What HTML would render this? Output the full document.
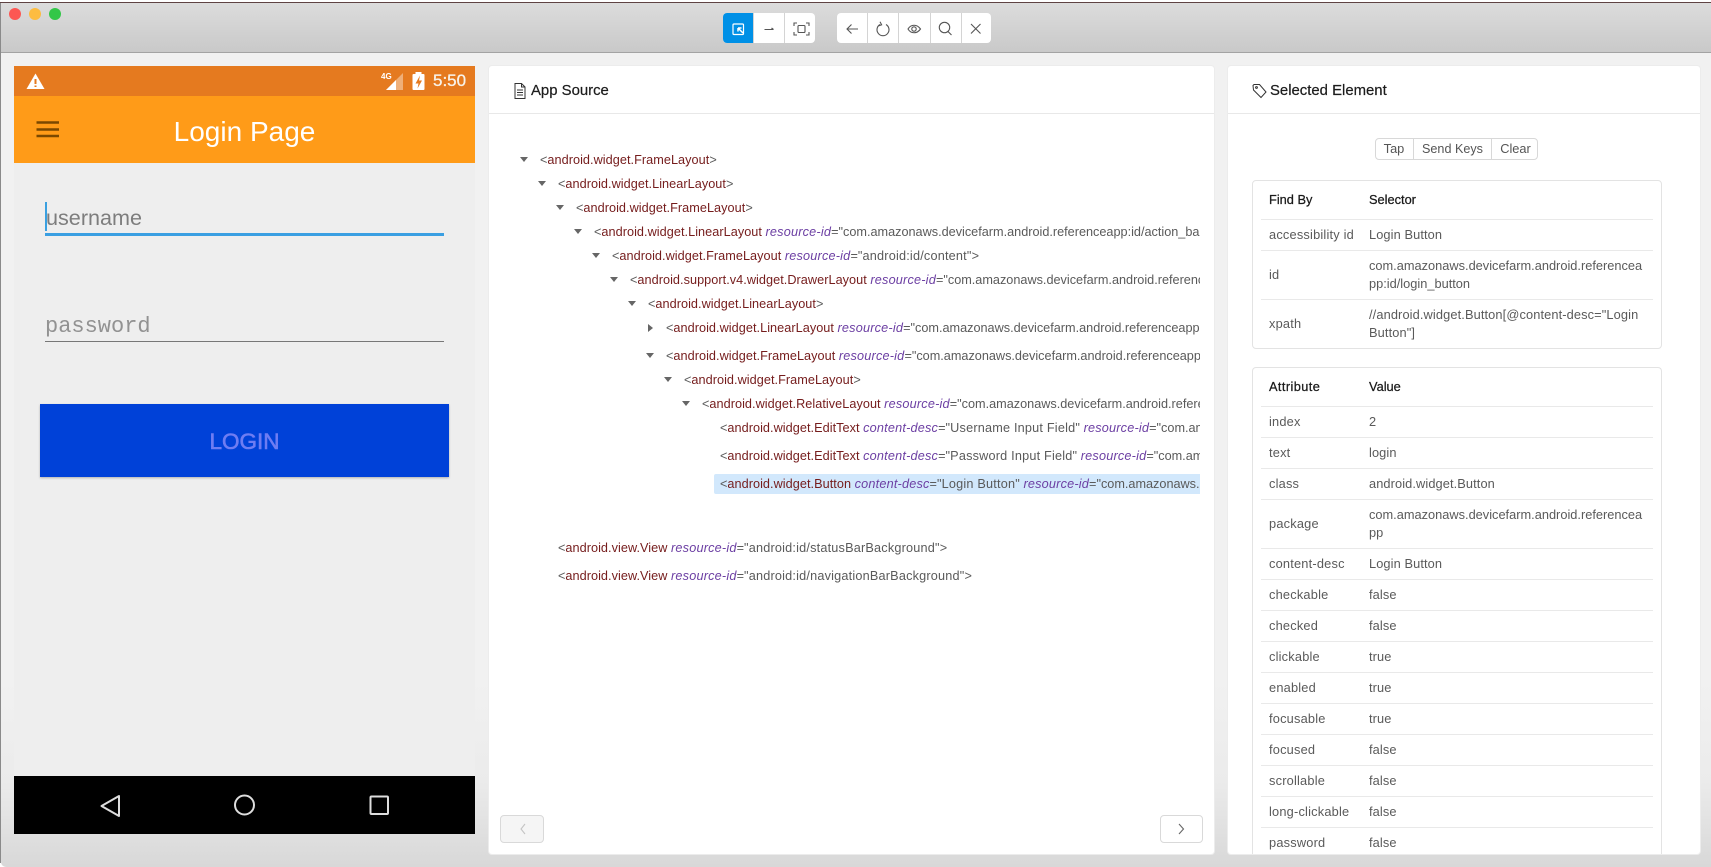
<!DOCTYPE html>
<html lang="en"><head><meta charset="utf-8"><title>Appium Inspector</title>
<style>
html,body{margin:0;padding:0}
body{width:1711px;height:867px;overflow:hidden;position:relative;font-family:"Liberation Sans",sans-serif;background:#fff}
div{position:absolute}
#win{left:1px;top:2px;width:1710px;height:865px;background:linear-gradient(#f1f1f1 0,#f1f1f1 680px,#ebebeb 780px,#d8d8d8 865px);border-bottom-left-radius:5px}
#edge{left:0;top:3px;width:1px;height:860px;background:#8a8a8a}
#topline{left:0;top:2px;width:1711px;height:1px;background:#5f4343}
#bar{left:1px;top:3px;width:1710px;height:49px;background:linear-gradient(#dcdcdc,#c9c9c9);border-bottom:1px solid #a3a3a3}
.dot{width:12px;height:12px;border-radius:50%;top:8px}
.grp{top:13px;height:30px;background:#fff;border-radius:4px}
.sep{top:0;width:1px;height:30px;background:#d4d4d4}
.panel{top:66px;height:788px;background:#fff;border-radius:3px;box-shadow:0 0 0 1px #ececec}
.hd{top:113px;height:1px;background:#e8e8e8}
.ttl{top:81px;line-height:20px;color:#1c1c1c;font-size:14.9px;white-space:nowrap;-webkit-text-stroke:.2px #1c1c1c}
.r{white-space:nowrap;overflow:hidden;line-height:20px;height:20px;font-size:12.68px;color:#5a5a5a}
.r b{font-weight:normal;color:#751c1c;letter-spacing:.05px}
.r i{color:#6c3fa3;letter-spacing:.2px}
.r u{text-decoration:none;letter-spacing:.2px}
.tri{width:0;height:0;border-left:4px solid transparent;border-right:4px solid transparent;border-top:5.5px solid #666}
.triR{width:0;height:0;border-top:4px solid transparent;border-bottom:4px solid transparent;border-left:5.5px solid #666}
.tb{border:1px solid #e3e3e3;border-radius:4px;box-sizing:border-box}
.ln{height:1px;background:#e9e9e9;left:1261px;width:392px}
.c,.d{font-size:12.8px;color:#5a5a5a;line-height:18px;white-space:nowrap}
.c{left:1269px;letter-spacing:.2px}.d{left:1369px;letter-spacing:.1px}
.h{color:#1a1a1a;-webkit-text-stroke:.25px #1a1a1a;letter-spacing:0}
</style></head><body>
<div id="win"></div><div id="edge"></div>
<div id="bar"></div><div id="topline"></div>
<div class="dot" style="left:9px;background:#fc5753"></div>
<div class="dot" style="left:29px;background:#fdbc40"></div>
<div class="dot" style="left:49px;background:#33c748"></div>

<div class="grp" style="left:723px;width:92px"><div style="left:0;top:0;width:30px;height:30px;background:#0090e6;border-radius:4px 0 0 4px"></div><div class="sep" style="left:30px"></div><div class="sep" style="left:61px"></div></div>
<div class="grp" style="left:837px;width:154px"><div class="sep" style="left:30px"></div><div class="sep" style="left:61px"></div><div class="sep" style="left:93px"></div><div class="sep" style="left:124px"></div></div>

<svg style="position:absolute;left:0;top:0" width="1711" height="867" viewBox="0 0 1711 867" fill="none">
<!-- toolbar icons -->
<rect x="733" y="24" width="10.500" height="10.500" fill="none" stroke="#fff" stroke-width="1.200" rx="1"/>
<path d="M738 28l5 5M738 28v3.500M738 28h3.500" stroke="#fff" stroke-width="1.500"/>
<path d="M764.500 29.500h9M771.500 28l2 1.500" stroke="#555" stroke-width="1.100"/>
<path d="M794 26v-3h3M806 23h3v3M809 32v3h-3M797 35h-3v-3" stroke="#555" stroke-width="1.100"/>
<rect x="798" y="25.500" width="7" height="7" rx="1" stroke="#555" stroke-width="1.100"/>
<path d="M847 29h11M851.500 24.500L847 29l4.500 4.500" stroke="#555" stroke-width="1.100"/>
<path d="M886 24.500a6 6 0 1 1-6 0M880 21.800l1.600 3-3 1" stroke="#555" stroke-width="1.100"/>
<path d="M908 29c3-5 9-5 12.500 0c-3.500 5-9.500 5-12.500 0z" stroke="#555" stroke-width="1.100"/><circle cx="914" cy="29" r="2.200" stroke="#555" stroke-width="1.100"/>
<circle cx="944.500" cy="27.500" r="5.200" stroke="#555" stroke-width="1.100"/><path d="M948 31.500l3.500 3.500" stroke="#555" stroke-width="1.100"/>
<path d="M971 24l9.500 9.500M980.500 24L971 33.500" stroke="#555" stroke-width="1.100"/>
</svg>

<!-- phone -->
<div style="left:14px;top:66px;width:461px;height:768px;background:#eee"></div>
<div style="left:14px;top:66px;width:461px;height:30px;background:#e57a1f"></div>
<div style="left:14px;top:96px;width:461px;height:67px;background:#ff9b18"></div>
<div style="left:14px;top:776px;width:461px;height:58px;background:#000"></div>
<div style="left:14px;top:111.500px;width:461px;text-align:center;font-size:28px;line-height:40px;color:#fff">Login Page</div>
<div style="left:433px;top:70px;font-size:17px;line-height:22px;color:#f8f3ea;-webkit-text-stroke:.3px #f8f3ea">5:50</div>
<div style="left:381px;top:72px;font-size:8px;line-height:10px;color:#fff;font-weight:bold">4G</div>
<div style="left:46px;top:203px;font-size:21.600px;line-height:30px;color:#7d7d7d">username</div>
<div style="left:45px;top:202px;width:2px;height:29px;background:#3aa0e0"></div>
<div style="left:45px;top:233px;width:399px;height:3px;background:#3a9fe2"></div>
<div style="left:45px;top:312px;font-family:'Liberation Mono',monospace;font-size:22px;line-height:30px;color:#929292">password</div>
<div style="left:45px;top:341px;width:399px;height:1px;background:#777"></div>
<div style="left:40px;top:404px;width:409px;height:73px;background:#0041d8;box-shadow:0 1px 2px rgba(0,0,0,.25)"></div>
<div style="left:40px;top:405px;width:409px;height:73px;line-height:74px;text-align:center;color:#6f7df2;font-size:22.500px;-webkit-text-stroke:.6px #6f7df2">LOGIN</div>
<svg style="position:absolute;left:0;top:0" width="1711" height="867" viewBox="0 0 1711 867" fill="none">
<path d="M35.500 73.500L26.500 89h18z" fill="#fff"/><path d="M35.500 79v5M35.500 85.500v1.500" stroke="#e57a1f" stroke-width="2"/>
<path d="M403 73v17h-17z" fill="#fff" fill-opacity=".4"/><path d="M396 80v10h-10z" fill="#fff"/>
<rect x="412.500" y="74" width="12" height="16" rx="1" fill="#fff"/><rect x="415.500" y="72" width="6" height="2" fill="#fff"/>
<path d="M420 75.500l-4.500 8h3l-1 5 4.500-8h-3z" fill="#e57a1f"/>
<path d="M36.500 122.500h22.500M36.500 129.500h22.500M36.500 136h22.500" stroke="#7a4800" stroke-width="2.400"/>
<path d="M119 796v20L101.500 806z" stroke="#ddd" stroke-width="2" stroke-linejoin="round"/>
<circle cx="244.500" cy="805" r="9.500" stroke="#ddd" stroke-width="2"/>
<rect x="370.500" y="796.500" width="17.500" height="17.500" rx="1" stroke="#ddd" stroke-width="2"/>
</svg>

<!-- App source -->
<div class="panel" style="left:489px;width:725px"></div>
<div class="hd" style="left:489px;width:725px"></div>
<svg style="position:absolute;left:514px;top:83px" width="12" height="16" viewBox="0 0 12 16" fill="none" stroke="#333" stroke-width="1"><path d="M1 .5h6.500l3.500 3.500v11.500H1zM7.500 .5V4H11M3 7h6M3 9.500h6M3 12h6"/></svg>
<div class="ttl" style="left:531px">App Source</div>

<div style="left:714px;top:474px;width:486px;height:20px;background:#d2e8fc;border-radius:2px 0 0 2px"></div>

<div class="tri" style="left:520px;top:157px"></div>
<div class="r" style="left:540px;top:150px;width:660px">&lt;<b>android.widget.FrameLayout</b>&gt;</div>
<div class="tri" style="left:538px;top:181px"></div>
<div class="r" style="left:558px;top:174px;width:642px">&lt;<b>android.widget.LinearLayout</b>&gt;</div>
<div class="tri" style="left:556px;top:205px"></div>
<div class="r" style="left:576px;top:198px;width:624px">&lt;<b>android.widget.FrameLayout</b>&gt;</div>
<div class="tri" style="left:574px;top:229px"></div>
<div class="r" style="left:594px;top:222px;width:606px">&lt;<b>android.widget.LinearLayout</b> <i>resource-id</i>="com.amazonaws.devicefarm.android.referenceapp:id/action_bar_root"&gt;</div>
<div class="tri" style="left:592px;top:253px"></div>
<div class="r" style="left:612px;top:246px;width:588px">&lt;<b>android.widget.FrameLayout</b> <i>resource-id</i>=<u>"android:id/content"&gt;</u></div>
<div class="tri" style="left:610px;top:277px"></div>
<div class="r" style="left:630px;top:270px;width:570px">&lt;<b>android.support.v4.widget.DrawerLayout</b> <i>resource-id</i>="com.amazonaws.devicefarm.android.referenceapp:id/drawer_layout"&gt;</div>
<div class="tri" style="left:628px;top:301px"></div>
<div class="r" style="left:648px;top:294px;width:552px">&lt;<b>android.widget.LinearLayout</b>&gt;</div>
<div class="triR" style="left:648px;top:324px"></div>
<div class="r" style="left:666px;top:318px;width:534px">&lt;<b>android.widget.LinearLayout</b> <i>resource-id</i>="com.amazonaws.devicefarm.android.referenceapp:id/toolbar"&gt;</div>
<div class="tri" style="left:646px;top:353px"></div>
<div class="r" style="left:666px;top:346px;width:534px">&lt;<b>android.widget.FrameLayout</b> <i>resource-id</i>="com.amazonaws.devicefarm.android.referenceapp:id/container"&gt;</div>
<div class="tri" style="left:664px;top:377px"></div>
<div class="r" style="left:684px;top:370px;width:516px">&lt;<b>android.widget.FrameLayout</b>&gt;</div>
<div class="tri" style="left:682px;top:401px"></div>
<div class="r" style="left:702px;top:394px;width:498px">&lt;<b>android.widget.RelativeLayout</b> <i>resource-id</i>="com.amazonaws.devicefarm.android.referenceapp:id/login_main"&gt;</div>
<div class="r" style="left:720px;top:418px;width:480px">&lt;<b>android.widget.EditText</b> <i>content-desc</i>=<u>"Username Input Field"</u> <i>resource-id</i>="com.amazonaws.devicefarm"&gt;</div>
<div class="r" style="left:720px;top:446px;width:480px">&lt;<b>android.widget.EditText</b> <i>content-desc</i>=<u>"Password Input Field"</u> <i>resource-id</i>="com.amazonaws.devicefarm"&gt;</div>
<div class="r" style="left:720px;top:474px;width:480px">&lt;<b>android.widget.Button</b> <i>content-desc</i>=<u>"Login Button"</u> <i>resource-id</i>="com.amazonaws.devicefarm"&gt;</div>
<div class="r" style="left:558px;top:538px;width:642px">&lt;<b>android.view.View</b> <i>resource-id</i>=<u>"android:id/statusBarBackground"&gt;</u></div>
<div class="r" style="left:558px;top:566px;width:642px">&lt;<b>android.view.View</b> <i>resource-id</i>=<u>"android:id/navigationBarBackground"&gt;</u></div>

<div class="tb" style="left:500px;top:815px;width:44px;height:28px;background:#f5f5f5;border-color:#d9d9d9"></div>
<div class="tb" style="left:1160px;top:815px;width:43px;height:28px;background:#fff;border-color:#d9d9d9"></div>
<svg style="position:absolute;left:0;top:0" width="1711" height="867" viewBox="0 0 1711 867" fill="none">
<path d="M525 824l-4 5 4 5" stroke="#c4c4c4" stroke-width="1.100"/>
<path d="M1179 824l4.500 5-4.500 5" stroke="#666" stroke-width="1.100"/>
</svg>

<!-- Selected element -->
<div class="panel" style="left:1228px;width:472px;overflow:hidden"></div>
<div class="hd" style="left:1228px;width:472px"></div>
<svg style="position:absolute;left:1252px;top:83px" width="15" height="16" viewBox="0 0 15 16" fill="none" stroke="#333" stroke-width="1"><path d="M1 2.500L2 1.500h5.500l6.500 7.500-5 5.500-7.500-7.500z"/><circle cx="4.500" cy="4.500" r=".9"/></svg>
<div class="ttl" style="left:1270px">Selected Element</div>

<div class="tb" style="left:1375px;top:138px;width:163px;height:22px;border-color:#d8d8d8"></div>
<div style="left:1413px;top:138px;width:1px;height:22px;background:#d8d8d8"></div>
<div style="left:1491px;top:138px;width:1px;height:22px;background:#d8d8d8"></div>
<div style="left:1375px;top:139px;width:38px;text-align:center;font-size:12.8px;line-height:20px;color:#555">Tap</div>
<div style="left:1414px;top:139px;width:77px;text-align:center;font-size:12.6px;line-height:20px;color:#555">Send Keys</div>
<div style="left:1492px;top:139px;width:47px;text-align:center;font-size:12.8px;line-height:20px;color:#555">Clear</div>

<div class="tb" style="left:1252px;top:180px;width:410px;height:169px"></div>
<div class="c h" style="top:191px">Find By</div><div class="d h" style="top:191px">Selector</div>
<div class="ln" style="top:219px"></div>
<div class="c" style="top:226px">accessibility id</div><div class="d" style="top:226px">Login Button</div>
<div class="ln" style="top:250px"></div>
<div class="c" style="top:266px">id</div><div class="d" style="top:257px;letter-spacing:0">com.amazonaws.devicefarm.android.referencea<br>pp:id/login_button</div>
<div class="ln" style="top:299px"></div>
<div class="c" style="top:315px">xpath</div><div class="d" style="top:306px;letter-spacing:.12px">//android.widget.Button[@content-desc="Login<br>Button"]</div>

<div class="tb" style="left:1252px;top:367px;width:410px;height:487px;border-bottom:none;border-radius:4px 4px 0 0"></div>
<div class="c h" style="top:378px;letter-spacing:.4px">Attribute</div><div class="d h" style="top:378px">Value</div>
<div class="ln" style="top:406px"></div>
<div class="c" style="top:413px">index</div><div class="d" style="top:413px">2</div>
<div class="ln" style="top:437px"></div>
<div class="c" style="top:444px">text</div><div class="d" style="top:444px">login</div>
<div class="ln" style="top:468px"></div>
<div class="c" style="top:475px">class</div><div class="d" style="top:475px">android.widget.Button</div>
<div class="ln" style="top:499px"></div>
<div class="c" style="top:515px">package</div><div class="d" style="top:506px;letter-spacing:0">com.amazonaws.devicefarm.android.referencea<br>pp</div>
<div class="ln" style="top:548px"></div>
<div class="c" style="top:555px">content-desc</div><div class="d" style="top:555px">Login Button</div>
<div class="ln" style="top:579px"></div>
<div class="c" style="top:586px">checkable</div><div class="d" style="top:586px">false</div>
<div class="ln" style="top:610px"></div>
<div class="c" style="top:617px">checked</div><div class="d" style="top:617px">false</div>
<div class="ln" style="top:641px"></div>
<div class="c" style="top:648px">clickable</div><div class="d" style="top:648px">true</div>
<div class="ln" style="top:672px"></div>
<div class="c" style="top:679px">enabled</div><div class="d" style="top:679px">true</div>
<div class="ln" style="top:703px"></div>
<div class="c" style="top:710px">focusable</div><div class="d" style="top:710px">true</div>
<div class="ln" style="top:734px"></div>
<div class="c" style="top:741px">focused</div><div class="d" style="top:741px">false</div>
<div class="ln" style="top:765px"></div>
<div class="c" style="top:772px">scrollable</div><div class="d" style="top:772px">false</div>
<div class="ln" style="top:796px"></div>
<div class="c" style="top:803px">long-clickable</div><div class="d" style="top:803px">false</div>
<div class="ln" style="top:827px"></div>
<div class="c" style="top:834px">password</div><div class="d" style="top:834px">false</div>
</body></html>
